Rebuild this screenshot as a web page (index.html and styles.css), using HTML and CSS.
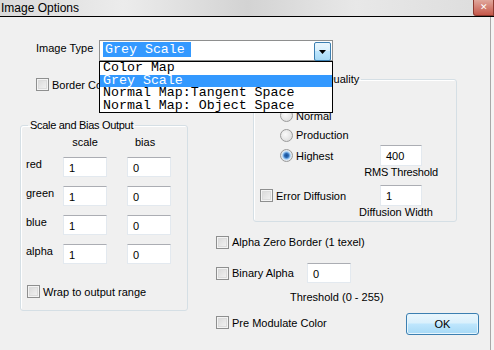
FILE: index.html
```html
<!DOCTYPE html>
<html>
  <head>
    <meta charset="utf-8">
    <title>Image Options</title>
    <link rel="stylesheet" href="styles.css">
  </head>
  <body>

    <!--Title bar-->
    <div id="titlebar">
      <span class="title">Image Options</span>
      <span class="close">&#x2715;</span>
    </div>

    <div id="dialog">

      <div class="typeRow">
        <span class="typeLabel">Image Type</span>
        <div class="combo">
          <div class="comboField"><span class="comboSel">Grey Scale</span></div>
          <div class="comboBtn">
            <svg width="7" height="4" viewBox="0 0 7 4"><path d="M0 0h7L3.5 4z" fill="#000"/></svg>
          </div>
          <ul class="comboList">
            <li>Color Map</li>
            <li class="on">Grey Scale</li>
            <li>Normal Map:Tangent Space</li>
            <li>Normal Map: Object Space</li>
          </ul>
        </div>
      </div>

      <div class="columns">

        <div class="colLeft">
          <div class="check borderRow"><span class="cb"></span>Border Color</div>

          <fieldset class="group scaleGroup">
            <legend>Scale and Bias Output</legend>
            <div class="sbHead"><span class="hScale">scale</span><span class="hBias">bias</span></div>
            <div class="sbRow"><span class="sbLabel">red</span><span class="tb">1</span><span class="tb bias">0</span></div>
            <div class="sbRow"><span class="sbLabel">green</span><span class="tb">1</span><span class="tb bias">0</span></div>
            <div class="sbRow"><span class="sbLabel">blue</span><span class="tb">1</span><span class="tb bias">0</span></div>
            <div class="sbRow"><span class="sbLabel">alpha</span><span class="tb">1</span><span class="tb bias">0</span></div>
            <div class="check wrapRow"><span class="cb"></span>Wrap to output range</div>
          </fieldset>
        </div>

        <div class="colRight">
          <fieldset class="group qualityGroup">
            <legend>Quality</legend>
            <div class="qRadio r1"><span class="rb"></span>Normal</div>
            <div class="qRadio r2"><span class="rb"></span>Production</div>
            <div class="qRow">
              <div class="qRadio"><span class="rb checked"></span>Highest</div>
              <div class="qCell"><span class="tb">400</span></div>
            </div>
            <div class="qRow qCaption"><span></span><span class="rms">RMS Threshold</span></div>
            <div class="qRow errRow">
              <div class="check errCheck"><span class="cb"></span>Error Diffusion</div>
              <div class="qCell"><span class="tb">1</span></div>
            </div>
            <div class="qRow qCaption"><span></span><span class="dw">Diffusion Width</span></div>
          </fieldset>

          <div class="check alphaRow"><span class="cb"></span>Alpha Zero Border (1 texel)</div>

          <div class="binaryRow">
            <div class="check binCheck"><span class="cb"></span>Binary Alpha</div>
            <span class="tb">0</span>
          </div>
          <div class="threshold">Threshold (0 - 255)</div>

          <div class="lastRow">
            <div class="check preCheck"><span class="cb"></span>Pre Modulate Color</div>
            <button class="ok">OK</button>
          </div>
        </div>

      </div>
    </div>

  </body>
</html>
```

FILE: styles.css
```css
html,body{
  margin: 0px;
  padding: 0px;
  width: 494px;
  height: 350px;
  overflow: hidden;
  font-family: "Liberation Sans", Arial, sans-serif;
  font-size: 11px;
  color: #000;
  background-color: #f4f4f4;
}

#titlebar{
  height: 16px;
  display: flex;
  align-items: center;
  justify-content: space-between;
  border-bottom: solid 1px #000;
  background: linear-gradient(90deg, #d9d9d9, #ececec 25%, #d3d3d3 50%, #e8e8e8 72%, #dcdcdc);
}

.title{
  font-size: 12px;
  padding-left: 1px;
}

.close{
  align-self: flex-start;
  width: 19px;
  height: 15px;
  line-height: 15px;
  text-align: center;
  font-size: 9px;
  color: #fff;
  background: linear-gradient(#e0a79c, #c5574a);
  border: solid 1px #8d3a30;
  border-top: none;
  border-bottom-left-radius: 3px;
}

#dialog{
  height: 333px;
  margin-right: 3px;
  background-color: #f0f0f0;
  border-right: solid 1px #a8a8a8;
}

/* image type combo */
.typeRow{
  display: flex;
  align-items: center;
  padding-top: 23px;
  padding-left: 36px;
}

.typeLabel{
  width: 63px;
  margin-top: -6px;
}

.combo{
  position: relative;
  width: 234px;
  height: 21px;
  box-sizing: border-box;
  border: solid 1px #8e8f8f;
  background-color: #fff;
  display: flex;
}

.comboField{
  flex: 1;
  padding: 2px 0 0 3px;
  font-family: "Liberation Mono", "Courier New", monospace;
  font-size: 13.3px;
  line-height: 14px;
}

.comboSel{
  background-color: #3399ff;
  color: #fff;
  padding: 0 6px 0 2px;
}

.comboBtn{
  width: 15px;
  height: 17px;
  margin: 1px;
  border: solid 1px #3c7fb1;
  border-radius: 2px;
  background: linear-gradient(#eaf6fd, #d9f0fc 45%, #bee6fd 50%, #a7d9f5);
  display: flex;
  align-items: center;
  justify-content: center;
}

.comboList{
  position: absolute;
  z-index: 10;
  top: calc(100% + 1px);
  left: -1px;
  width: 234px;
  box-sizing: border-box;
  margin: 0;
  padding: 0;
  list-style: none;
  background-color: #fff;
  border: solid 1px #000;
  font-family: "Liberation Mono", "Courier New", monospace;
  font-size: 13.3px;
}

.comboList li{
  height: 12.5px;
  line-height: 12.5px;
  padding-left: 3px;
  white-space: nowrap;
}

.comboList li.on{
  background-color: #3399ff;
  color: #fff;
}

/* columns */
.columns{
  display: flex;
  padding-left: 20px;
}

.colLeft{
  width: 169px;
}

.colRight{
  width: 263px;
  margin-left: 27px;
}

/* checkbox + radio */
.check{
  display: flex;
  align-items: center;
  white-space: nowrap;
}

.cb{
  width: 13px;
  height: 13px;
  box-sizing: border-box;
  margin-right: 3px;
  border: solid 1px #8e8f8f;
  background: linear-gradient(135deg, #d6d6d6, #f6f6f6);
  box-shadow: inset 0 0 0 1px #f4f4f4, inset 0 0 0 2px #dcdcdc;
  flex-shrink: 0;
}

.rb{
  width: 13px;
  height: 13px;
  box-sizing: border-box;
  margin-right: 3px;
  border: solid 1px #9a9a9a;
  border-radius: 50%;
  background: radial-gradient(circle at 40% 40%, #fafafa, #d6d6d6);
  flex-shrink: 0;
}

.rb.checked{
  background: radial-gradient(circle, #1a4f92 0, #2a6ab5 2px, #8fc0ef 3.5px, #d6e6f5 4.5px, #e8e8e8 5.5px);
}

.tb{
  display: block;
  width: 44px;
  height: 20px;
  box-sizing: border-box;
  padding: 4px 0 0 5px;
  background-color: #fff;
  border: solid 1px #e3e9ef;
  border-top-color: #abadb3;
}

/* group boxes */
.group{
  margin: 0;
  padding: 0;
  min-width: 0;
  border: solid 1px #d5dfe5;
  border-radius: 3px;
  box-shadow: inset 1px 1px 0 #fff;
}

.group legend{
  line-height: 13px;
  padding: 0 2px;
  margin-left: 2px;
}

.borderRow{
  margin-top: 17px;
  margin-left: 16px;
  height: 13px;
}

.scaleGroup{
  margin-top: 28px;
  width: 168px;
  box-sizing: border-box;
  padding: 4px 0 12px 5px;
}

.scaleGroup legend{
  letter-spacing: -0.3px;
}

.sbHead{
  display: flex;
  height: 12px;
  line-height: 12px;
  padding-left: 37px;
}

.hScale{
  width: 44px;
  text-align: center;
}

.hBias{
  margin-left: 20px;
  padding-left: 8px;
}

.sbRow{
  display: flex;
  margin-top: 9px;
}

.sbLabel{
  width: 37px;
  padding-top: 1px;
}

.sbRow .bias{
  margin-left: 20px;
}

.wrapRow{
  margin-top: 21px;
  margin-left: 1px;
  height: 13px;
}

/* quality */
.qualityGroup{
  margin-top: 12px;
  margin-left: 37px;
  width: 204px;
  box-sizing: border-box;
  padding: 20px 0 3px 0;
}

.qualityGroup legend{
  margin-left: 69px;
}

.qRadio{
  display: flex;
  align-items: center;
  padding-left: 26px;
}

.qRadio.r1{
  height: 19px;
}

.qRadio.r2{
  height: 20px;
}

.qRow{
  display: grid;
  grid-template-columns: 98px 98px;
  height: 21px;
  align-items: center;
}

.qCell{
  display: flex;
  justify-content: center;
}

.qCell .tb{
  width: 42px;
  height: 21px;
}

.qCaption{
  height: 12px;
  line-height: 12px;
  text-align: center;
}

.qCaption .rms{
  letter-spacing: -0.2px;
}

.qCaption .dw{
  margin-left: -10px;
}

.errRow{
  margin-top: 7px;
}

.errCheck{
  padding-left: 6px;
}

/* alpha options */
.alphaRow{
  margin-top: 13px;
  height: 14px;
}

.binaryRow{
  display: flex;
  align-items: center;
  margin-top: 14px;
  height: 20px;
}

.binCheck{
  width: 91px;
}

.binaryRow .tb{
  height: 20px;
}

.threshold{
  margin-top: 8px;
  height: 12px;
  line-height: 12px;
  padding-left: 74px;
}

.lastRow{
  display: flex;
  margin-top: 10px;
  height: 22px;
}

.preCheck{
  align-self: flex-start;
  margin-top: 3px;
  height: 13px;
}

.ok{
  margin-left: auto;
  width: 73px;
  height: 22px;
  font-family: "Liberation Sans", Arial, sans-serif;
  font-size: 11px;
  color: #000;
  border: solid 1px #3c7fb1;
  border-radius: 3px;
  background: linear-gradient(#eaf6fd, #d9f0fc 45%, #bee6fd 50%, #a7d9f5);
  box-shadow: inset 0 0 0 1px #e6f5fd;
  padding: 0;
}
```
